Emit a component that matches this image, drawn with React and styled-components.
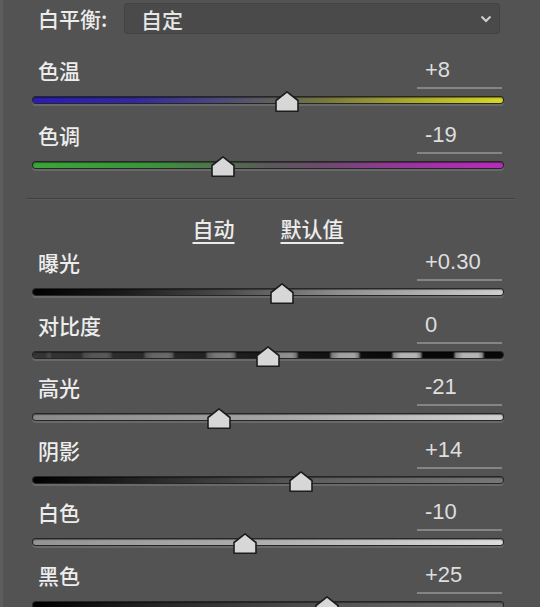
import React from "react";
import styled, { createGlobalStyle } from "styled-components";

const GlobalStyle = createGlobalStyle`
  body {
    margin: 0;
    background: #535353;
  }
`;

const Panel = styled.div`
  width: 540px;
  height: 607px;
  overflow: hidden;
  box-sizing: border-box;
  background: #535353;
  border-left: 3px solid #5d5d5d;
  padding: 0 37px 0 30px;
  font-family: "Noto Sans CJK SC", "Noto Sans", sans-serif;
  font-weight: 500;
  color: #ececec;
`;

const WbRow = styled.div`
  display: flex;
  align-items: center;
  padding: 3px 3px 0 5px;
`;

const WbLabel = styled.div`
  width: 86px;
  font-size: 21px;
  line-height: 31px;
`;

const Dropdown = styled.div`
  flex: 1;
  height: 31px;
  box-sizing: border-box;
  display: flex;
  align-items: center;
  justify-content: space-between;
  padding: 0 7px 0 16px;
  background: #4a4a4a;
  border: 1px solid #434343;
  border-radius: 3px;
  font-size: 21px;
  color: #e6e6e6;
`;

const TopGroup = styled.div`
  margin-top: 19px;
`;

const Block = styled.div`
  height: ${(p) => p.$h}px;
`;

const Header = styled.div`
  display: flex;
  justify-content: space-between;
  height: 36px;
  padding-left: 5px;
`;

const Label = styled.div`
  font-size: 21px;
  line-height: 34px;
  color: #ededed;
`;

const Value = styled.div`
  width: 85px;
  margin-right: 1px;
  box-sizing: border-box;
  padding-left: 8px;
  border-bottom: 2px solid #858585;
  font-family: "Liberation Sans", Arial, sans-serif;
  font-weight: 400;
  font-size: 22px;
  line-height: 34px;
  color: #dedede;
`;

const TrackWrap = styled.div`
  position: relative;
  margin-top: 8px;
  height: 6px;
`;

const Track = styled.div`
  height: 6px;
  border-radius: 3px;
  background: ${(p) => p.$fill};
  background-position: ${(p) => p.$pos || "0 0"};
  box-shadow: 0 0 0 1px #262626, 0 2px 0 1px rgba(255, 255, 255, 0.13),
    inset 0 1px 1px rgba(0, 0, 0, 0.45);
`;

const Thumb = styled.svg`
  position: absolute;
  top: -6px;
  transform: translateX(-50%);
  width: 24px;
  height: 21px;
  overflow: visible;
`;

const Separator = styled.div`
  margin: 15px -12px 0 -6px;
  height: 1px;
  background: #3f3f3f;
  border-bottom: 1px solid #5b5b5b;
`;

const Buttons = styled.div`
  display: flex;
  justify-content: center;
  gap: 46px;
  height: 45px;
  box-sizing: border-box;
  padding-top: 16px;
`;

const LinkBtn = styled.span`
  font-size: 21px;
  line-height: 24px;
  color: #ececec;
  text-decoration: underline;
  text-decoration-thickness: 1.5px;
  text-underline-offset: 5px;
`;

const fills = {
  temp: "linear-gradient(90deg, #2a1cb4 0%, #33299c 22%, #4c4a78 40%, #5e5e5e 50%, #78783e 62%, #aeae2c 82%, #d8d822 100%)",
  tint: "linear-gradient(90deg, #3aa63a 0%, #3c943c 25%, #52704f 40%, #5a5a5a 50%, #6e4a6e 62%, #9c34a2 82%, #b82cbc 100%)",
  exposure: "linear-gradient(90deg, #000 0%, #1c1c1c 20%, #4e4e4e 42%, #8e8e8e 65%, #cfcfcf 100%)",
  contrast:
    "linear-gradient(90deg, rgba(58,58,58,0.9) 0%, rgba(58,58,58,0.55) 35%, rgba(58,58,58,0) 78%), repeating-linear-gradient(90deg, #080808 0px, #080808 30px, #8a8a8a 33px, #b4b4b4 40px, #b4b4b4 55px, #8a8a8a 59px, #080808 62px)",
  highlights: "linear-gradient(90deg, #8a8a8a 0%, #a4a4a4 50%, #d2d2d2 100%)",
  shadows: "linear-gradient(90deg, #000 0%, #303030 30%, #5e5e5e 60%, #767676 100%)",
  whites: "linear-gradient(90deg, #939393 0%, #b0b0b0 50%, #dcdcdc 100%)",
  blacks: "linear-gradient(90deg, #000 0%, #2a2a2a 30%, #555 65%, #6c6c6c 100%)",
};

const Slider = ({ label, value, num, min, max, fill, pos, h }) => {
  const pct = ((num - min) / (max - min)) * 100;
  return (
    <Block $h={h}>
      <Header>
        <Label>{label}</Label>
        <Value>{value}</Value>
      </Header>
      <TrackWrap>
        <Track $fill={fill} $pos={pos} />
        <Thumb style={{ left: `${pct}%` }} viewBox="0 0 24 21">
          <polygon
            points="12,0.8 23,9.5 23,20.2 1,20.2 1,9.5"
            fill="#d7d7d7"
            stroke="#1c1c1c"
            strokeWidth="1.6"
            strokeLinejoin="round"
          />
        </Thumb>
      </TrackWrap>
    </Block>
  );
};

const tone = [
  { label: "曝光", value: "+0.30", num: 0.3, min: -5, max: 5, fill: fills.exposure },
  { label: "对比度", value: "0", num: 0, min: -100, max: 100, fill: fills.contrast, pos: "0 0, 18px 0" },
  { label: "高光", value: "-21", num: -21, min: -100, max: 100, fill: fills.highlights },
  { label: "阴影", value: "+14", num: 14, min: -100, max: 100, fill: fills.shadows },
  { label: "白色", value: "-10", num: -10, min: -100, max: 100, fill: fills.whites },
  { label: "黑色", value: "+25", num: 25, min: -100, max: 100, fill: fills.blacks },
];

export default function App() {
  return (
    <>
      <GlobalStyle />
      <Panel>
        <WbRow>
          <WbLabel>白平衡:</WbLabel>
          <Dropdown>
            <span>自定</span>
            <svg width="12" height="8" viewBox="0 0 12 8">
              <polyline points="1.5,1.5 6,6 10.5,1.5" fill="none" stroke="#d0d0d0" strokeWidth="2" />
            </svg>
          </Dropdown>
        </WbRow>
        <TopGroup>
          <Slider label="色温" value="+8" num={8} min={-100} max={100} fill={fills.temp} h={65} />
          <Slider label="色调" value="-19" num={-19} min={-100} max={100} fill={fills.tint} h={65} />
        </TopGroup>
        <Separator />
        <Buttons>
          <LinkBtn>自动</LinkBtn>
          <LinkBtn>默认值</LinkBtn>
        </Buttons>
        {tone.map((s) => (
          <Slider key={s.label} {...s} h={62.5} />
        ))}
      </Panel>
    </>
  );
}
